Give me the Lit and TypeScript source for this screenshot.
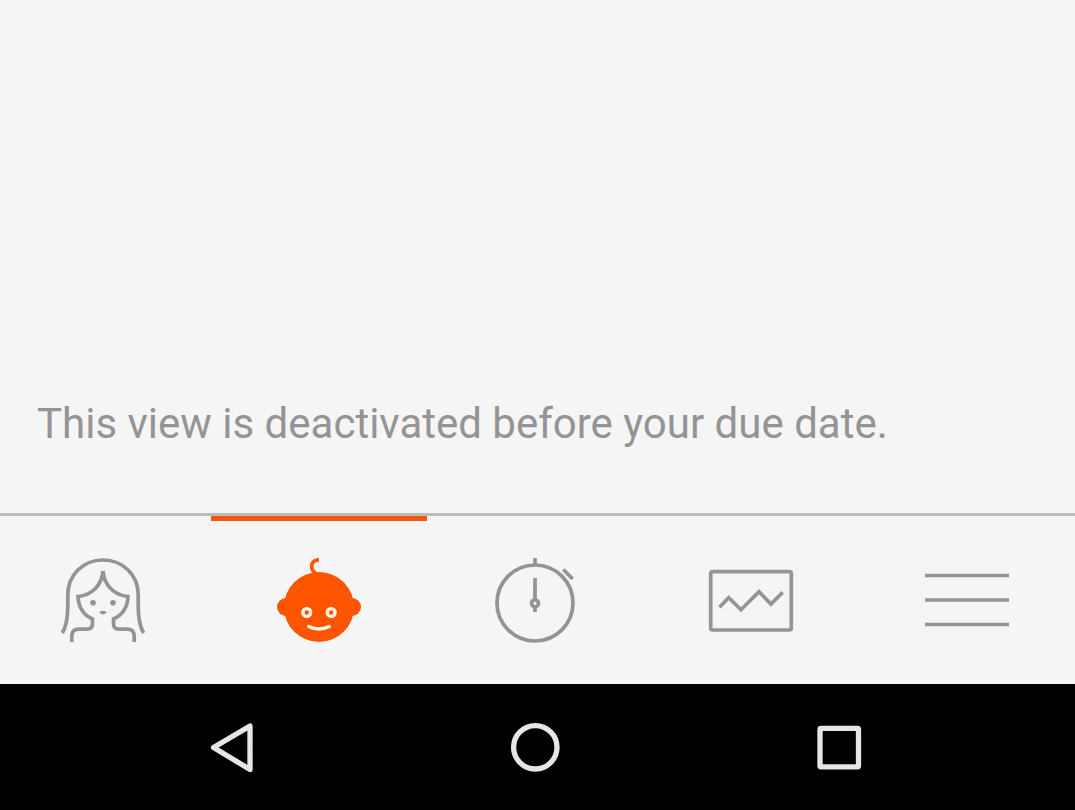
import { LitElement, html, css, svg } from "lit";
import { customElement, state } from "lit/decorators.js";

const tabs = [
  {
    label: "Mother",
    icon: svg`
      <path d="M1.400 75C5 69 6.800 62 6.800 47V37C6.800 17 22 2 42 2S77.200 17 77.200 37V47C77.200 62 79 69 82.600 75"/>
      <path d="M42 13C41 27 31 37 17 38.500C17.500 49 22.500 57 31.500 61V65.500C31.500 69.500 29.500 71.200 26 71.200H18C13 71.200 10.800 73.500 10.800 78V84"/>
      <path d="M42 13C43 27 53 37 67 38.500C66.500 49 61.500 57 52.500 61V65.500C52.500 69.500 54.500 71.200 58 71.200H66C71 71.200 73.200 73.500 73.200 78V84"/>
      <g class="solid"><circle cx="32" cy="44.700" r="2.800"/><circle cx="52" cy="44.700" r="2.800"/>
      <path d="M38.200 54.600Q40.500 52 42 53Q43.500 52 45.800 54.600Q42 58.200 38.200 54.600Z"/></g>`,
  },
  {
    label: "Baby",
    icon: svg`
      <g class="solid"><circle cx="42" cy="49" r="35"/><circle cx="9" cy="49" r="9"/><circle cx="75" cy="49" r="9"/></g>
      <path d="M39 15.500C32 11 34 1.800 42 1.800"/>
      <g class="light"><circle cx="29.800" cy="54.500" r="3.900"/><circle cx="54.200" cy="54.500" r="3.900"/>
      <path d="M31.700 68.400Q42 73.600 52.300 68.400"/></g>`,
  },
  {
    label: "Timer",
    icon: svg`
      <circle cx="42" cy="45" r="38"/>
      <path d="M42 0V8M70.300 11.500L79.700 21M42 20V41M42 49V54"/>
      <circle cx="42" cy="45.300" r="3.500"/>`,
  },
  {
    label: "Statistics",
    icon: svg`
      <rect x="1.700" y="13.700" width="80.600" height="58.300" rx="2"/>
      <path d="M10.500 49.200L19.700 39.700L32 51.700L50 33.700L62 46L73.700 34.300"/>`,
  },
  {
    label: "Menu",
    icon: svg`<path d="M0 17.500H84M0 42H84M0 66.500H84"/>`,
  },
];

const systemKeys = [
  { label: "Back", icon: svg`<path d="M18.500 36.500L55 15V58.500Z"/>` },
  { label: "Home", icon: svg`<circle cx="36.300" cy="36.300" r="21.700"/>` },
  { label: "Recent apps", icon: svg`<rect x="17" y="17.300" width="38.500" height="38.500" rx="1"/>` },
];

@customElement("app-root")
export class AppRoot extends LitElement {
  @state() private selected = 1;

  static styles = css`
    :host {
      display: flex;
      flex-direction: column;
      min-height: 100vh;
      overflow: hidden;
      background: #f5f5f5;
      color: #949494;
      font-family: Roboto, "Liberation Sans", sans-serif;
    }
    main {
      flex: 1;
      display: flex;
      align-items: flex-end;
      padding: 0 37px 64px;
    }
    .message {
      margin: 0;
      font-size: 42px;
      line-height: 50px;
    }
    button {
      display: flex;
      align-items: center;
      justify-content: center;
      margin: 0;
      padding: 0;
      border: 0;
      background: none;
      color: inherit;
      cursor: pointer;
    }
    svg {
      display: block;
      overflow: visible;
      fill: none;
      stroke: currentColor;
    }
    .tabs {
      display: grid;
      grid-template-columns: repeat(5, 1fr);
      margin-left: -5px;
      border-top: 3px solid #bbbdbd;
    }
    .tab {
      height: 168px;
    }
    .tab.selected {
      color: #ff5500;
      box-shadow: inset 0 5px #f9540f;
    }
    .tab svg {
      width: 84px;
      height: 84px;
      stroke-width: 3.7;
    }
    .solid {
      fill: currentColor;
      stroke: none;
    }
    .light {
      stroke: #fff4e8;
      stroke-width: 3.4;
      stroke-linecap: round;
    }
    .system {
      display: grid;
      grid-template-columns: repeat(3, 1fr);
      margin-left: -5px;
      padding: 0 84px;
      background: #000;
      color: #e6e6e6;
    }
    .key {
      height: 126px;
    }
    .key svg {
      width: 72px;
      height: 72px;
      stroke-width: 5.3;
      stroke-linejoin: round;
    }
  `;

  render() {
    return html`
      <main><p class="message">This view is deactivated before your due date.</p></main>
      <nav class="tabs" aria-label="Sections">
        ${tabs.map(
          (tab, i) => html`<button
            class="tab ${i === this.selected ? "selected" : ""}"
            aria-label=${tab.label}
            aria-pressed=${i === this.selected}
            @click=${() => (this.selected = i)}
          ><svg viewBox="0 0 84 84" aria-hidden="true">${tab.icon}</svg></button>`
        )}
      </nav>
      <nav class="system" aria-label="System">
        ${systemKeys.map(
          (key) => html`<button class="key" aria-label=${key.label}>
            <svg viewBox="0 0 72 72" aria-hidden="true">${key.icon}</svg>
          </button>`
        )}
      </nav>
    `;
  }
}
